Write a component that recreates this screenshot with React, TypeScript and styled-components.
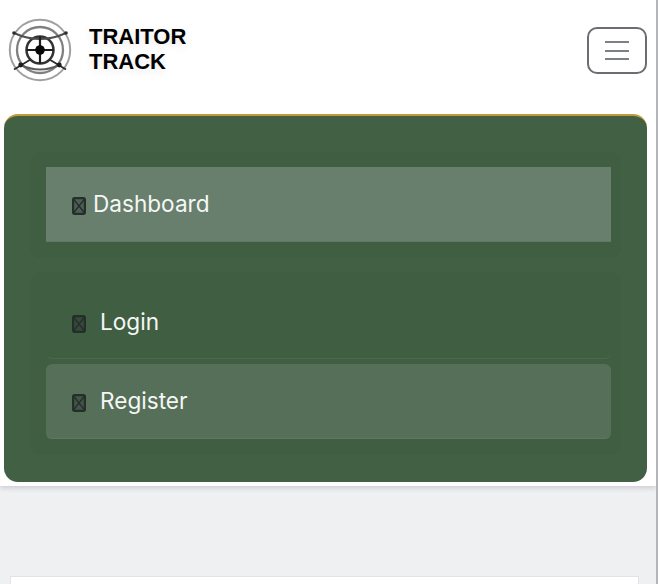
import { createGlobalStyle } from "styled-components"
import styled from "styled-components"

const GlobalStyle = createGlobalStyle`
    html, body {
        margin: 0;
        padding: 0;
        height: 584px;
        overflow: hidden;
        background: #eff0f2;
        font-family: "Inter", "Liberation Sans", sans-serif;
    }
`

const Logo = () => (
    <LogoSvg viewBox="0 0 64 64" aria-hidden="true">
        <g fill="none">
            <circle cx="32" cy="32" r="30.2" stroke="#a0a0a0" strokeWidth="2" />
            <circle cx="32" cy="32" r="23" stroke="#808080" strokeWidth="2.3" />
            <circle cx="32" cy="32" r="13.5" stroke="#333" strokeWidth="2.5" />
            <path d="M6 15Q32 27 58 15" stroke="#4e4e4e" strokeWidth="2" />
            <path d="M12.7 47Q32 56 51.3 47" stroke="#5c5c5c" strokeWidth="2" />
            <path d="M22.5 41.5L6 51.5M41.5 41.5L58 51.5" stroke="#2c2c2c" strokeWidth="1.8" />
            <path d="M32 18.5V45.5M18.5 32H45.5" stroke="#1c1c1c" strokeWidth="2.2" />
        </g>
        <circle cx="32" cy="32" r="4.8" fill="#080808" />
        <circle cx="6" cy="15" r="1.8" fill="#2c2c2c" />
        <circle cx="58" cy="15" r="1.8" fill="#2c2c2c" />
        <circle cx="12.7" cy="47" r="2.4" fill="#1c1c1c" />
        <circle cx="51.3" cy="47" r="2.4" fill="#1c1c1c" />
    </LogoSvg>
)

const MissingGlyph = () => (
    <GlyphSvg viewBox="0 0 14 18" aria-hidden="true">
        <rect x="1.1" y="1.1" width="11.8" height="15.8" rx="1.6" fill="rgba(30,40,36,0.35)" stroke="#262e2c" strokeWidth="2.2" />
        <path d="M1.5 2L12.5 16M12.5 2L1.5 16" stroke="#262e2c" strokeWidth="1.4" />
    </GlyphSvg>
)

const App = () => {
    return (
        <Page>
            <GlobalStyle />
            <TopArea>
                <Header>
                    <Brand>
                        <Logo />
                        <BrandName>TRAITOR<br />TRACK</BrandName>
                    </Brand>
                    <Toggler aria-label="Toggle navigation">
                        <TogglerBar />
                        <TogglerBar />
                        <TogglerBar />
                    </Toggler>
                </Header>
                <NavPanel>
                    <NavGroup>
                        <NavItem $variant="active" $gap={7}>
                            <MissingGlyph />Dashboard
                        </NavItem>
                    </NavGroup>
                    <NavGroup>
                        <NavItem $variant="plain" $gap={14}>
                            <MissingGlyph />Login
                        </NavItem>
                        <NavItem $variant="hover" $gap={14}>
                            <MissingGlyph />Register
                        </NavItem>
                    </NavGroup>
                </NavPanel>
            </TopArea>
            <Content>
                <Card />
            </Content>
        </Page>
    )
}

export default App

const Page = styled.div`
    width: 656px;
    height: 584px;
    border-right: 2px solid #b4b5b8;
    overflow: hidden;
    background: #eff0f2;
`

const TopArea = styled.div`
    height: 486px;
    box-sizing: border-box;
    padding: 0 9px 4px 4px;
    background: #fff;
    box-shadow: 0 2px 5px rgba(60, 64, 80, 0.2);
    position: relative;
`

const Header = styled.header`
    height: 114px;
    display: flex;
    align-items: flex-start;
    justify-content: space-between;
`

const Brand = styled.div`
    display: flex;
    align-items: center;
    gap: 17px;
    padding: 18px 0 0 4px;
`

const LogoSvg = styled.svg`
    width: 64px;
    height: 64px;
    display: block;
    filter: blur(0.6px);
`

const BrandName = styled.div`
    font-family: "Liberation Sans", Arial, sans-serif;
    font-size: 22px;
    font-weight: 700;
    line-height: 25px;
    color: #000;
    text-shadow: 0 3px 8px rgba(0, 0, 0, 0.1);
    margin-top: -3px;
`

const Toggler = styled.button`
    width: 60px;
    height: 47px;
    margin-top: 27px;
    padding: 0;
    box-sizing: border-box;
    border: 2px solid #6a6d71;
    border-radius: 10px;
    background: transparent;
    display: flex;
    flex-direction: column;
    align-items: center;
    justify-content: center;
    gap: 6.5px;
`

const TogglerBar = styled.span`
    width: 24px;
    height: 2px;
    background: #7d8084;
`

const NavPanel = styled.nav`
    height: 368px;
    box-sizing: border-box;
    padding: 36px 26px 26px;
    display: flex;
    flex-direction: column;
    gap: 14px;
    background: #426144;
    border-top: 2px solid #c09a3c;
    border-radius: 14px;
`

const NavGroup = styled.div`
    padding: 15px 10px 16px 16px;
    display: flex;
    flex-direction: column;
    gap: 5px;
    background: #405e42;
    border-radius: 10px;
`

const itemBackground = {
    active: "#677f6c",
    hover: "#566f59",
    plain: "transparent",
}

const NavItem = styled.a<{ $variant: "active" | "hover" | "plain"; $gap: number }>`
    height: ${(p) => (p.$variant === "plain" ? 72 : 75)}px;
    box-sizing: border-box;
    padding-left: 27px;
    display: flex;
    align-items: center;
    gap: ${(p) => p.$gap}px;
    font-size: 22.6px;
    line-height: 1;
    color: #f5f7f5;
    background: ${(p) => itemBackground[p.$variant]};
    border-radius: ${(p) => (p.$variant === "active" ? "0" : "6px")};
    border-bottom: 1px solid ${(p) => (p.$variant === "plain" ? "#4a694d" : "#5f7863")};
`

const GlyphSvg = styled.svg`
    width: 14px;
    height: 18px;
    flex: none;
    margin: 3px 0 0 -1px;
`

const Content = styled.main`
    padding: 91px 18px 0 11px;
`

const Card = styled.div`
    height: 40px;
    background: #fff;
    box-shadow: 0 0 0 1px #e2e3e8;
`
